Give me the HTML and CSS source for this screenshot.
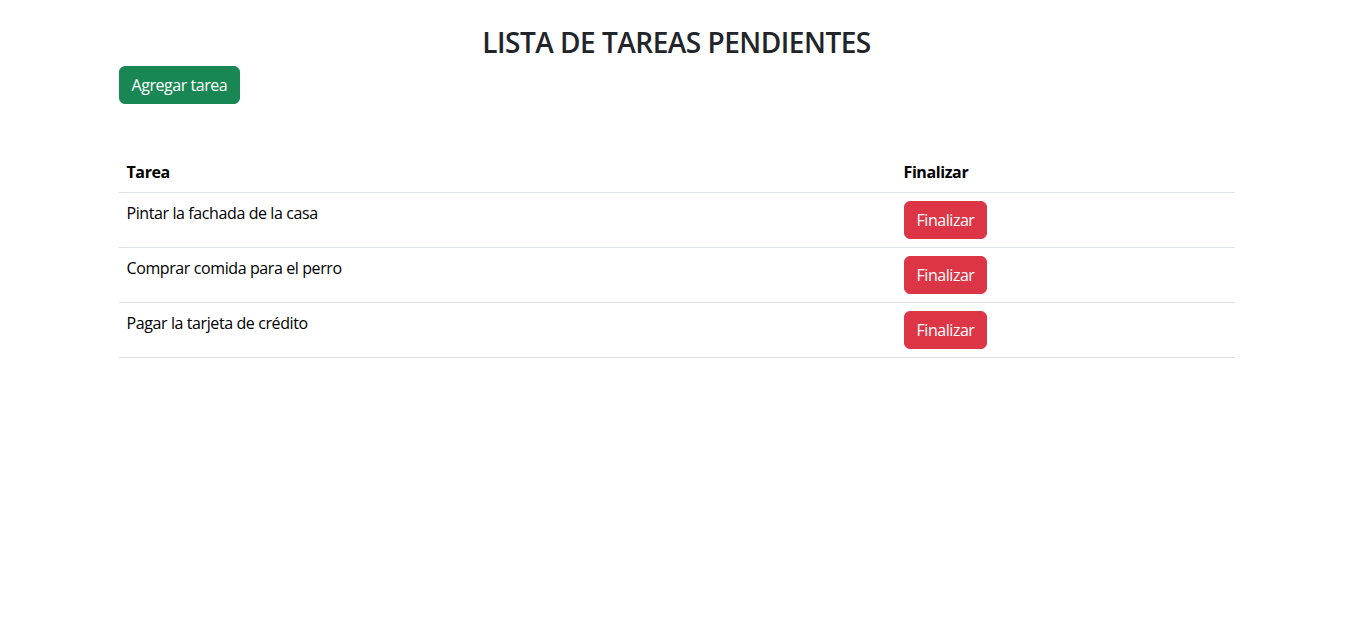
FILE: index.html
```html
<!DOCTYPE html>
<html lang="es">
<head>
<meta charset="utf-8">
<title>Lista de tareas</title>
<link rel="stylesheet" href="styles.css">
</head>
<body>
<div class="container">
  <h2 class="title">LISTA DE TAREAS PENDIENTES</h2>
  <button class="btn btn-success">Agregar tarea</button>
  <table class="table">
    <thead>
      <tr><th class="col-task">Tarea</th><th>Finalizar</th></tr>
    </thead>
    <tbody>
      <tr><td>Pintar la fachada de la casa</td><td><button class="btn btn-danger">Finalizar</button></td></tr>
      <tr><td>Comprar comida para el perro</td><td><button class="btn btn-danger">Finalizar</button></td></tr>
      <tr><td>Pagar la tarjeta de crédito</td><td><button class="btn btn-danger">Finalizar</button></td></tr>
    </tbody>
  </table>
</div>
</body>
</html>
```
FILE: styles.css
```css
* { box-sizing: border-box; }
html, body { margin: 0; padding: 0; }
body {
  font-family: "Open Sans", "Noto Sans", sans-serif;
  font-size: 16px;
  line-height: 1.5;
  letter-spacing: -0.4px;
  color: #212529;
  background: #fff;
}
.container {
  max-width: 1140px;
  margin: 0 auto;
  padding: 0 12px;
}
.title {
  margin: 23px 0 5px;
  text-align: center;
  font-size: 28px;
  font-weight: 600;
  line-height: 38px;
  letter-spacing: -0.5px;
  color: #212529;
}
.btn {
  display: inline-block;
  font-family: inherit;
  font-size: 16px;
  line-height: 24px;
  letter-spacing: -0.45px;
  padding: 6px 12px;
  border: 1px solid transparent;
  border-radius: 6px;
  color: #fff;
  cursor: pointer;
}
.btn-success { background: #198754; border-color: #198754; }
.btn-danger { background: #dc3545; border-color: #dc3545; }
.table {
  width: 100%;
  margin-top: 48px;
  border-collapse: collapse;
  color: #000;
  vertical-align: top;
}
.table th, .table td {
  padding: 8px;
  text-align: left;
  vertical-align: top;
  border-bottom: 1px solid #dee2e6;
}
.table th { font-weight: 700; }
.col-task { width: 777px; }
```
